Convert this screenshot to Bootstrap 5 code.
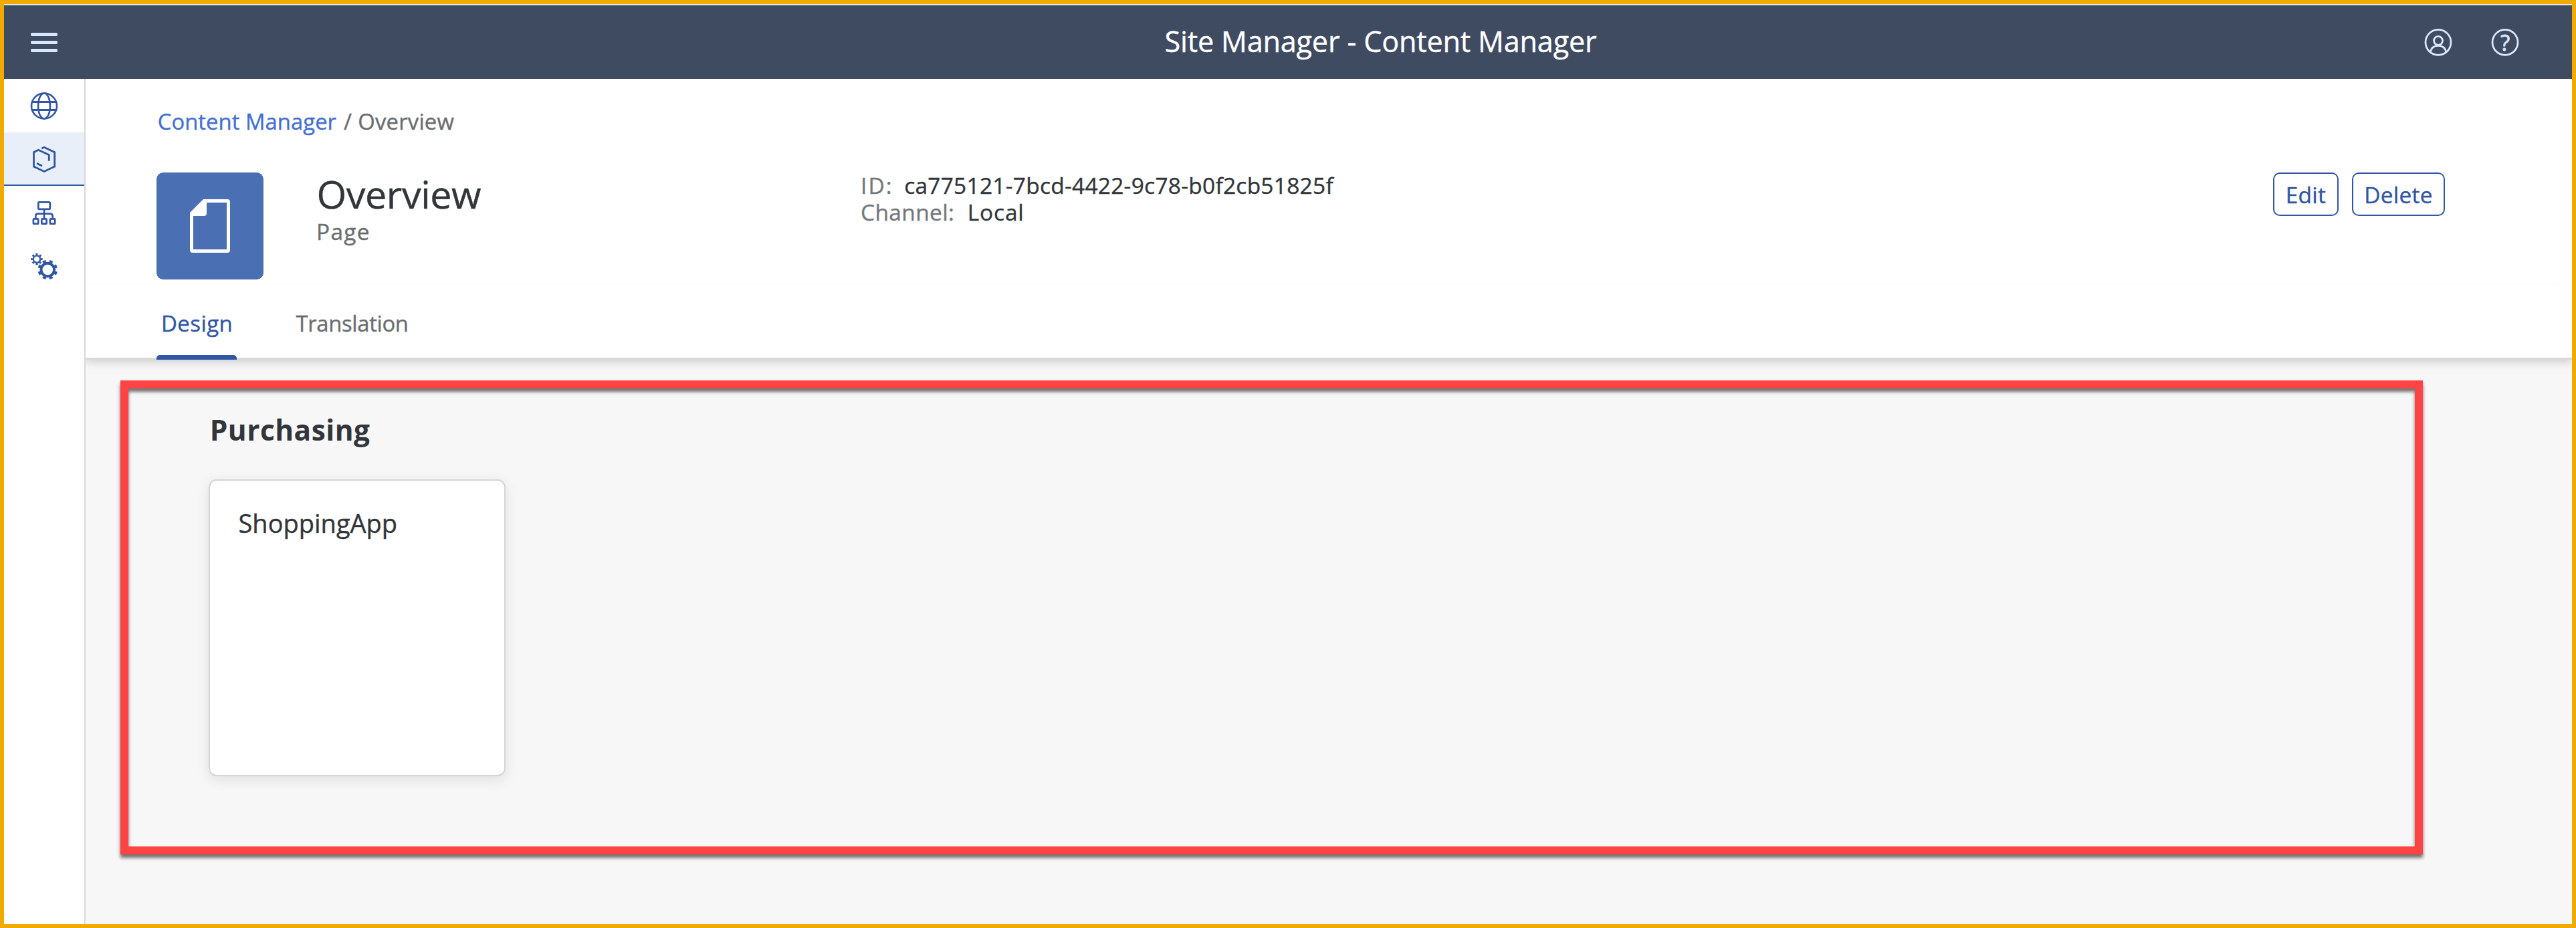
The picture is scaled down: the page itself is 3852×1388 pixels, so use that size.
<!DOCTYPE html>
<html lang="en">
<head>
<meta charset="utf-8">
<title>Site Manager - Content Manager</title>
<link href="https://cdn.jsdelivr.net/npm/bootstrap@5.3.0/dist/css/bootstrap.min.css" rel="stylesheet">
<style>
body{font-family:"Open Sans","Noto Sans",sans-serif;font-size:33px;line-height:40px;color:#32363a;background:#f7f7f7;-webkit-text-stroke:.4px currentColor}
svg{-webkit-text-stroke:0}
.app-frame{height:1388px;border:6px solid #f0ab00;overflow:hidden}
.shell-bar{height:112px;background:#3f4b61;border-top:2px solid #e2e4e6;border-bottom:0;color:#d9e6ff;padding:0 78px 0 38px;flex:none}
.shell-title{font-size:43.1px;letter-spacing:-.14px;line-height:60px;color:#fff;margin-left:1653.5px;padding-bottom:2px;font-weight:400}
.shell-icons{gap:56px}
.burger,.shell-icons svg,.side-item svg{width:44px;height:44px;display:block;flex:none}
.side-bar{width:122px;border-right:2px solid #d9d9d9;background:#fff;flex:none}
.side-item{height:80px;color:#3156a3;border-radius:0}
.side-item.active{background:#e8eff9;border-bottom:2px solid #3156a3}
.page-head{background:#fff;padding:44px 190px 0 106px;height:308px;border-bottom:2px solid #fcfcfc}
.crumbs{height:40px;margin:0 0 56px 1.7px;font-size:32.8px;color:#6a6d70;letter-spacing:.2px;padding:0}
.crumbs a{color:#4470d2;letter-spacing:.05px}
.crumb-sep{margin:0 9px 0 11px}
.tile-icon{width:160px;height:160px;border-radius:10px;background:#4a6fb3;flex:none}
.title-box{width:812px;margin-left:79.5px;flex:none}
.title-box h1{font-size:57.5px;line-height:65px;letter-spacing:-.46px;font-weight:400;margin:0}
.title-box p{font-size:33.4px;line-height:46px;letter-spacing:1.3px;color:#6a6d70;margin:0;text-indent:-.5px}
.facts{font-size:33.4px;margin:-1px 0 0 1.5px;letter-spacing:.31px}
.facts dt{font-weight:400;color:#74777a;letter-spacing:.4px;margin-right:19.5px}
.facts dt.short-key{letter-spacing:2.1px;margin-right:16.5px}
.facts dd{margin:0}
.facts .local-val{letter-spacing:.9px}
.actions{gap:20px}
.actions .btn{--bs-btn-color:#3156a3;--bs-btn-border-color:#3156a3;--bs-btn-bg:#fff;height:65px;border-width:2px;border-radius:10px;padding:0;font-size:33.4px;line-height:60px;letter-spacing:.3px}
.btn-edit{width:98px}.btn-del{width:139px}
.tab-strip{background:#fff;height:112px;padding-left:106px;border-bottom:3px solid #d9d9d9;box-shadow:0 4px 12px rgba(0,0,0,.16);clip-path:inset(0 0 -24px 0);position:relative;flex-wrap:nowrap}
.tab-strip .nav-link{padding:38px 0 0;height:112px;color:#6a6d70;font-size:32.8px;letter-spacing:-.33px;border-radius:0}
.tab-strip .nav-link.active{width:120px;margin-right:88.5px;padding-left:7px;color:#3156a3;font-size:33px;letter-spacing:.4px;position:relative}
.tab-strip .nav-link.active::after{content:"";position:absolute;left:0;right:0;bottom:0;height:7px;border-radius:5px 5px 0 0;background:#3156a3}
.marked-area{margin:31px 0 0 52px;width:3443px;height:709px;border:12px solid #fd4444;padding:32px 0 0 120px;box-shadow:0 5px 5px rgba(0,0,0,.55),inset 0 5px 5px rgba(0,0,0,.55)}
.marked-area h2{font-size:42.4px;line-height:60px;font-weight:700;letter-spacing:.5px;margin:0 0 44px 1.7px;-webkit-text-stroke:0}
.app-tile{width:444px;height:444px;border:2px solid #d5d5d5;border-radius:12px;padding:38px 42.5px;box-shadow:0 5px 20px rgba(0,0,0,.1);font-size:38px;line-height:50px}
</style>
</head>
<body>
<div class="app-frame d-flex flex-column">
  <header class="shell-bar d-flex align-items-center">
    <svg class="burger" viewBox="0 0 44 44" fill="#d9e6ff"><rect x="2" y="8" width="40" height="5" rx="2"/><rect x="2" y="20" width="40" height="5" rx="2"/><rect x="2" y="32" width="40" height="5" rx="2"/></svg>
    <h1 class="shell-title mb-0 text-nowrap">Site Manager - Content Manager</h1>
    <div class="shell-icons d-flex ms-auto">
      <svg viewBox="0 0 44 44" fill="none" stroke="currentColor" stroke-width="2.8"><circle cx="22" cy="22.3" r="19"/><circle cx="22" cy="19.8" r="6.5"/><path d="M10.3 37Q12 27.3 22 27.3T33.7 37"/></svg>
      <svg viewBox="0 0 44 44"><circle cx="22" cy="22.3" r="19" fill="none" stroke="currentColor" stroke-width="2.8"/><text x="22" y="34.5" text-anchor="middle" font-size="33" fill="currentColor" stroke="currentColor" stroke-width=".8">?</text></svg>
    </div>
  </header>
  <div class="d-flex flex-grow-1">
    <nav class="side-bar nav flex-column">
      <a class="side-item d-flex align-items-center justify-content-center"><svg viewBox="0 0 44 44" fill="none" stroke="currentColor" stroke-width="2.6"><circle cx="22" cy="22.5" r="19"/><ellipse cx="22" cy="22.5" rx="9" ry="19"/><path d="M4 16.5H40M4 28.5H40" stroke-width="2.9"/></svg></a>
      <a class="side-item active d-flex align-items-center justify-content-center"><svg viewBox="0 0 44 44" fill="none" stroke="currentColor" stroke-width="2.8"><path d="M18.3 6.9 22 5.2 37.7 12.7V34L22 41.4 6.5 34V12.7L13.5 9.3 29.3 16.7V25.8M11 29.3 19 33.3"/></svg></a>
      <a class="side-item d-flex align-items-center justify-content-center"><svg viewBox="0 0 44 44" fill="none" stroke="currentColor" stroke-width="2.7"><rect x="13.3" y="6.3" width="17.5" height="10.5" rx="1.5"/><path d="M22 17V31M9.3 31V27.5Q9.3 23.7 13.2 23.7H30.8Q34.7 23.7 34.7 27.5V31"/><rect x="5.9" y="31.3" width="7.3" height="7.3" rx="1.2"/><rect x="18.3" y="31.3" width="7.3" height="7.3" rx="1.2"/><rect x="30.9" y="31.3" width="7.3" height="7.3" rx="1.2"/></svg></a>
      <a class="side-item d-flex align-items-center justify-content-center"><svg viewBox="0 0 44 44" fill="none" stroke="currentColor"><circle cx="11" cy="11.6" r="5.2" stroke-width="2.4"/><circle cx="11" cy="11.6" r="7.4" stroke-width="2.8" pathLength="16" stroke-dasharray="1" transform="rotate(-11.25 11 11.6)"/><circle cx="27.3" cy="27.5" r="9.8" stroke-width="4"/><circle cx="27.3" cy="27.5" r="12.9" stroke-width="3.8" pathLength="16" stroke-dasharray="1" transform="rotate(11.25 27.3 27.5)"/></svg></a>
    </nav>
    <main class="flex-grow-1">
      <section class="page-head">
        <div class="crumbs d-flex text-nowrap"><a class="text-decoration-none">Content Manager</a><span class="crumb-sep">/</span><span>Overview</span></div>
        <div class="d-flex align-items-start">
          <div class="tile-icon d-flex align-items-center justify-content-center"><svg width="60" height="80" viewBox="0 0 60 80" fill="#fff" fill-rule="evenodd"><path d="M20 0H56Q60 0 60 4V76Q60 80 56 80H4Q0 80 0 76V20ZM25 5V21Q25 25 21 25H5V75H55V5Z"/></svg></div>
          <div class="title-box"><h1>Overview</h1><p>Page</p></div>
          <dl class="facts text-nowrap">
            <div class="d-flex"><dt class="short-key">ID:</dt><dd>ca775121-7bcd-4422-9c78-b0f2cb51825f</dd></div>
            <div class="d-flex"><dt>Channel:</dt><dd class="local-val">Local</dd></div>
          </dl>
          <div class="actions d-flex ms-auto"><button class="btn btn-edit">Edit</button><button class="btn btn-del">Delete</button></div>
        </div>
      </section>
      <div class="tab-strip nav"><a class="nav-link active">Design</a><a class="nav-link">Translation</a></div>
      <section class="marked-area">
        <h2>Purchasing</h2>
        <div class="app-tile bg-white">ShoppingApp</div>
      </section>
    </main>
  </div>
</div>
<script src="https://cdn.jsdelivr.net/npm/bootstrap@5.3.0/dist/js/bootstrap.bundle.min.js"></script>
</body>
</html>
